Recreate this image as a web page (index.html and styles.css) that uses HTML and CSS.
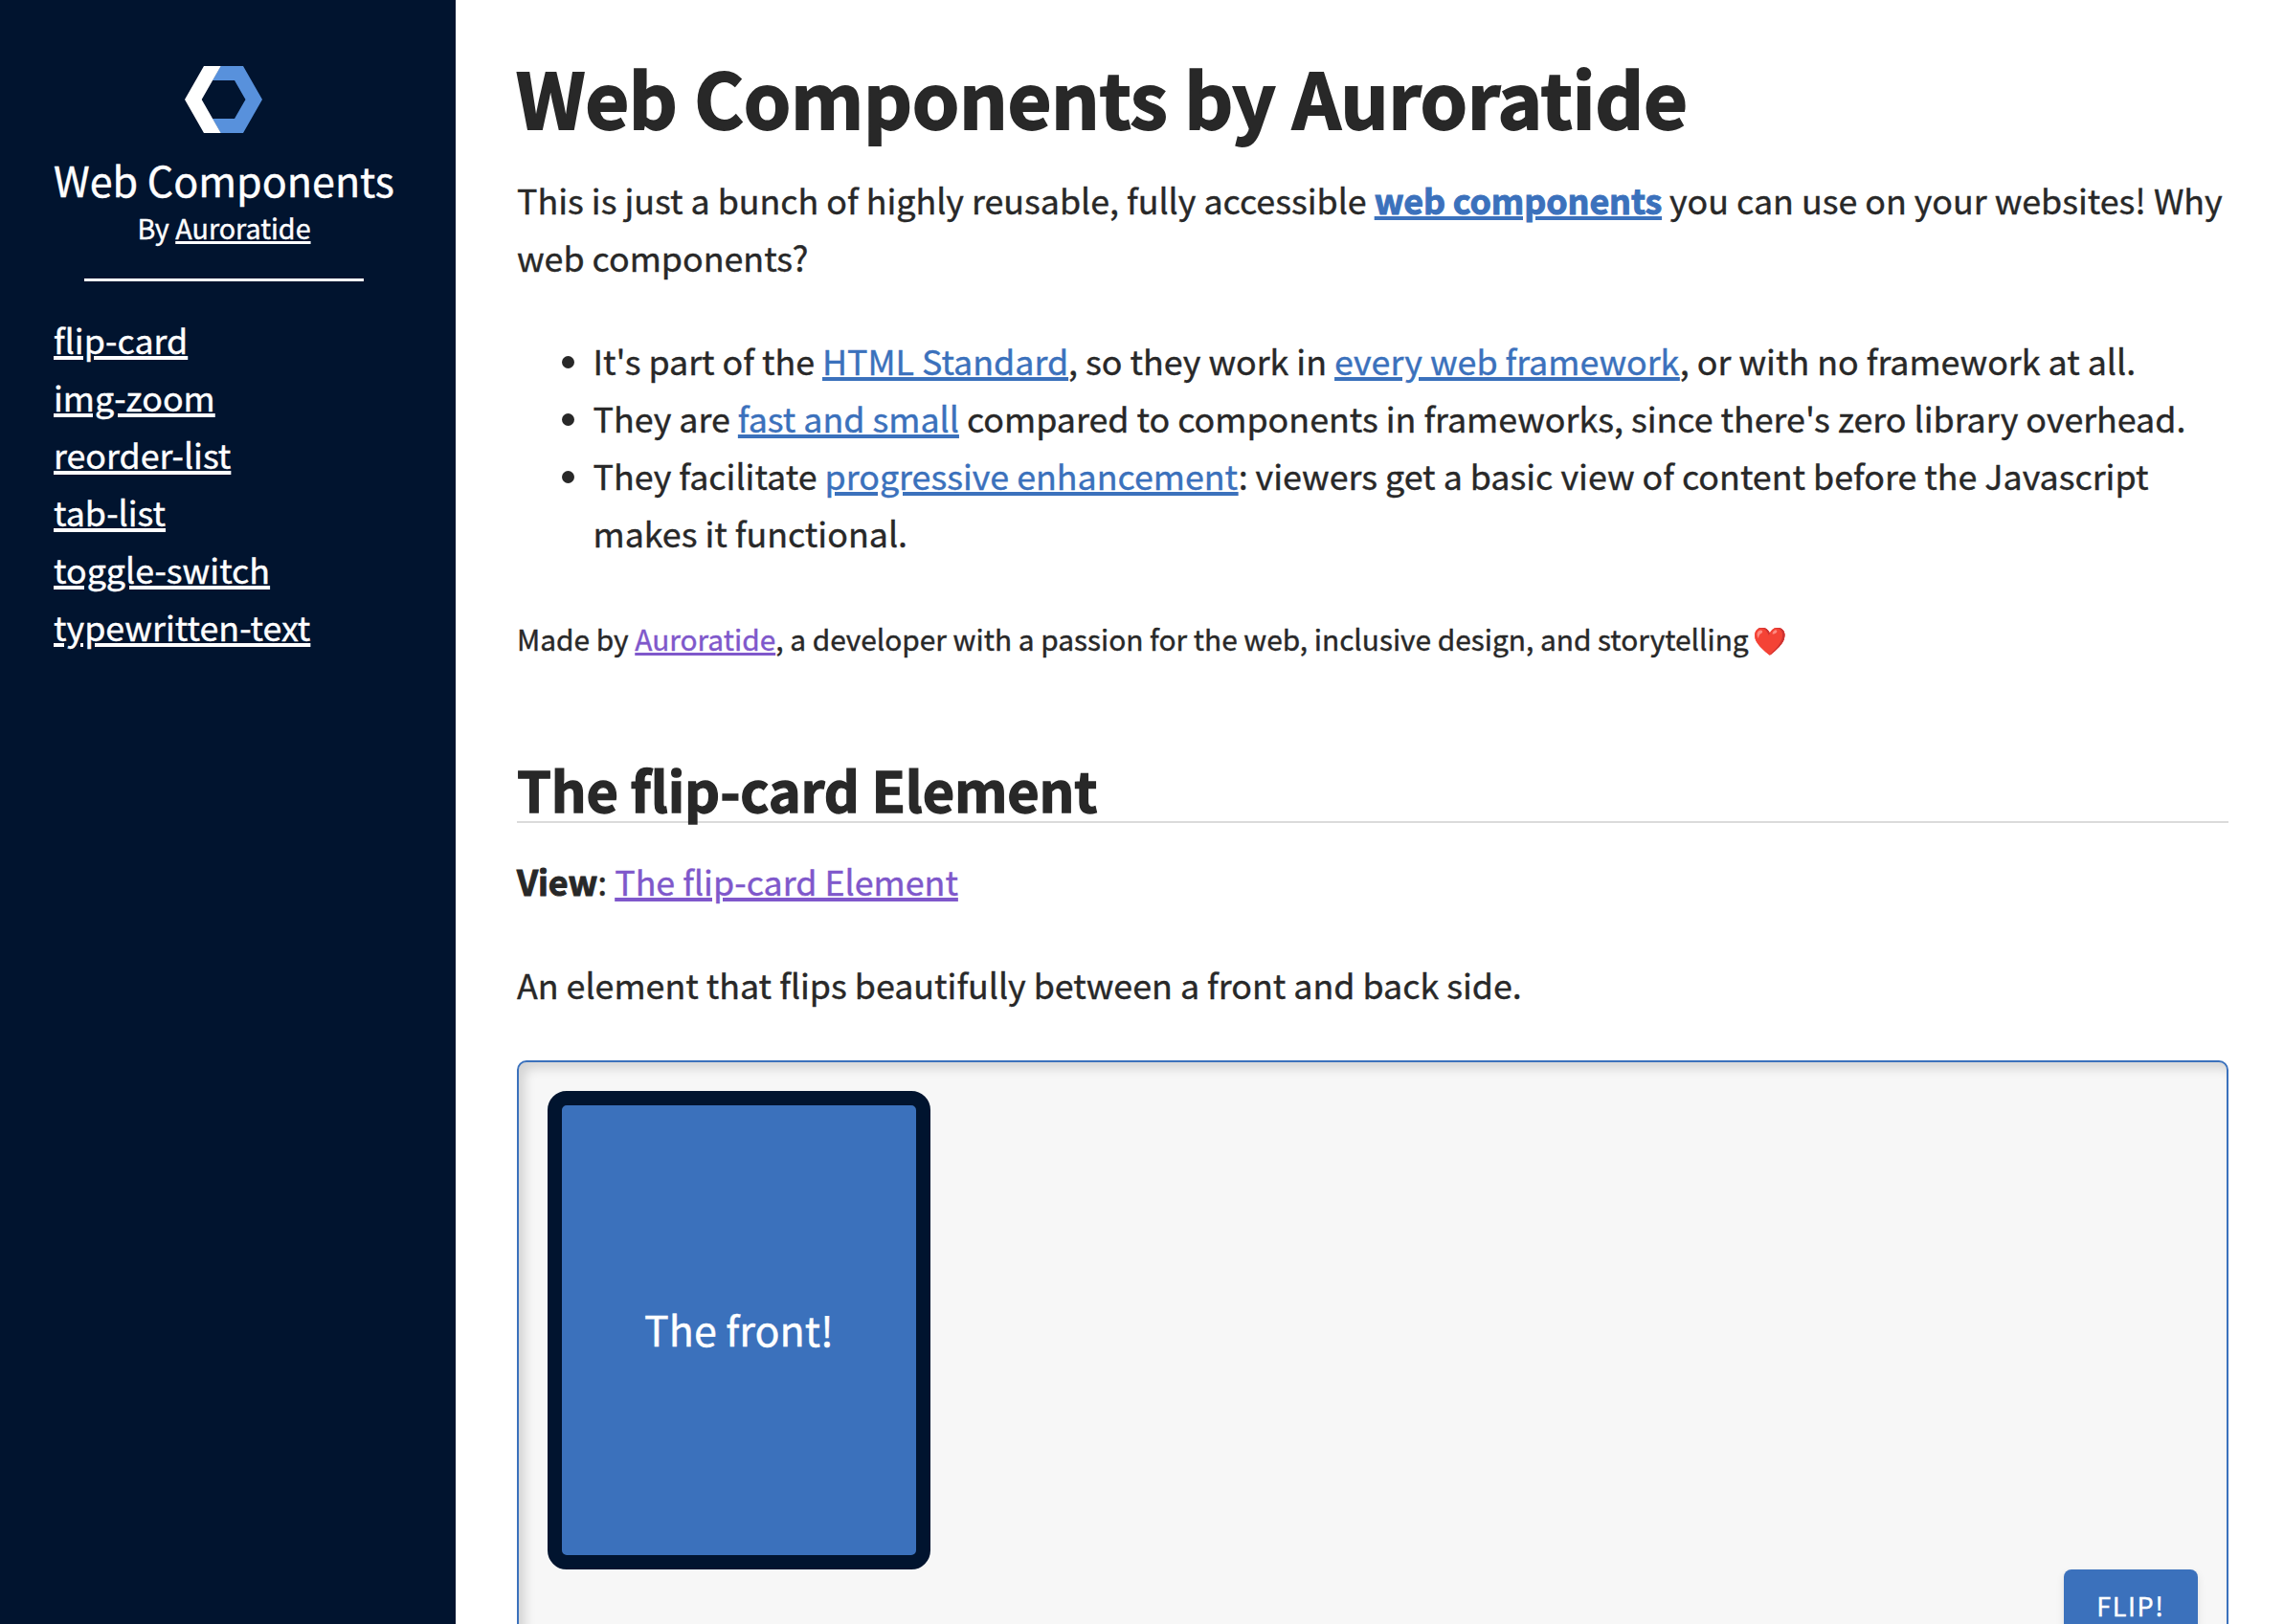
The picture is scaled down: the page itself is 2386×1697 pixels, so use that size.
FILE: index.html
```html
<!DOCTYPE html>
<html lang="en">
<head>
<meta charset="utf-8">
<title>Web Components by Auroratide</title>
<link rel="stylesheet" href="styles.css">
</head>
<body>
<div class="layout">
  <aside class="sidebar">
    <header class="brand">
      <svg class="logo" viewBox="0 0 81 70" aria-hidden="true">
        <path fill="#5891dc" d="M37.5 0H61L81 35 61 70H37.5L29 55H52L63.5 35 52 15H29Z"/>
        <path fill="#fff" d="M20 0H37.7L17.7 35 37.7 70H20L0 35Z"/>
      </svg>
      <div class="brand-name">Web Components</div>
      <div class="brand-by">By <a href="#">Auroratide</a></div>
      <hr class="rule">
    </header>
    <nav class="nav">
      <a href="#">flip-card</a>
      <a href="#">img-zoom</a>
      <a href="#">reorder-list</a>
      <a href="#">tab-list</a>
      <a href="#">toggle-switch</a>
      <a href="#">typewritten-text</a>
    </nav>
  </aside>
  <main class="content">
    <h1>Web Components by Auroratide</h1>
    <p>This is just a bunch of highly reusable, fully accessible <a href="#"><strong>web components</strong></a> you can use on your websites! Why web components?</p>
    <ul class="reasons">
      <li>It's part of the <a href="#">HTML Standard</a>, so they work in <a href="#">every web framework</a>, or with no framework at all.</li>
      <li>They are <a href="#">fast and small</a> compared to components in frameworks, since there's zero library overhead.</li>
      <li>They facilitate <a href="#">progressive enhancement</a>: viewers get a basic view of content before the Javascript makes it functional.</li>
    </ul>
    <p class="credit">Made by <a class="visited" href="#">Auroratide</a>, a developer with a passion for the web, inclusive design, and storytelling <span class="heart">❤️</span></p>
    <h2>The flip-card Element</h2>
    <p><strong>View</strong>: <a class="visited" href="#">The flip-card Element</a></p>
    <p>An element that flips beautifully between a front and back side.</p>
    <section class="demo">
      <div class="card">The front!</div>
      <button class="flip">FLIP!</button>
    </section>
  </main>
</div>
</body>
</html>
```
FILE: styles.css
```css
* { box-sizing: border-box; }
html, body { height: 100%; }
body {
  margin: 0;
  overflow: hidden;
  background: #fff;
  color: #282828;
  font: 400 35.8px/60px "Noto Sans CJK JP", "Noto Sans", sans-serif;
  -webkit-text-stroke: 0.4px currentColor;
}
a {
  color: #3b71bc;
  text-decoration: underline;
  text-decoration-thickness: 4px;
  text-underline-offset: 2px;
  -webkit-text-stroke-color: currentColor;
}
a.visited { color: #7f58cb; }
strong {
  font-weight: 700;
  letter-spacing: -0.1px;
  -webkit-text-stroke-width: 1px;
}

.layout { display: flex; height: 100%; }

/* Sidebar */
.sidebar {
  flex: none;
  width: 476px;
  padding: 69px 64px 0 56px;
  background: #01142f;
  color: #fff;
}
.sidebar a { color: inherit; }
.brand {
  display: flex;
  flex-direction: column;
  align-items: center;
  width: 356px;
}
.logo { display: block; width: 81px; height: 70px; margin-right: 1px; }
.brand-name {
  margin-top: 18px;
  font-size: 43px;
  line-height: 60px;
  white-space: nowrap;
}
.brand-by { font-size: 28.7px; line-height: 42px; }
.brand-by a { text-decoration-thickness: 3px; }
.rule {
  width: 292px;
  height: 3px;
  margin: 32px 0 0;
  border: 0;
  background: #fff;
}
.nav {
  display: flex;
  flex-direction: column;
  align-items: flex-start;
  margin-top: 30px;
}

/* Main column */
.content {
  flex: 1;
  min-width: 0;
  padding: 57px 58px 0 64px;
}
h1 {
  margin: 0 0 33px -1px;
  font-size: 79.2px;
  line-height: 88px;
  letter-spacing: -0.32px;
  -webkit-text-stroke-width: 1.8px;
}
p { margin: 0 0 48px; }
.reasons {
  margin: 0 0 56px;
  padding: 0 0 0 79.5px;
  list-style: none;
}
.reasons li { position: relative; }
.reasons li::before {
  content: "";
  position: absolute;
  top: 25.5px;
  left: -33px;
  width: 13.5px;
  height: 13.5px;
  border-radius: 50%;
  background: currentColor;
}
.credit {
  height: 50px;
  margin-bottom: 96px;
  font-size: 29.84px;
  line-height: 50px;
}
.credit a { text-decoration-thickness: 3px; }
.heart { margin-left: -2px; font-size: 28.5px; line-height: 1; }
h2 {
  height: 72px;
  margin: 0 0 30px;
  border-bottom: 2px solid #dbdbdb;
  font-size: 57.6px;
  line-height: 72px;
  letter-spacing: -0.2px;
  -webkit-text-stroke-width: 1.3px;
}

/* Demo box */
.demo {
  height: 640px;
  margin-top: 50px;
  padding: 30px;
  border: 2px solid #3b71bc;
  border-radius: 10px;
  background: #f7f7f7;
  box-shadow: inset 6px 6px 12px rgba(0, 0, 0, 0.15);
  display: flex;
  flex-direction: column;
  align-items: flex-start;
}
.card {
  flex: none;
  display: flex;
  align-items: center;
  justify-content: center;
  width: 400px;
  height: 500px;
  padding-bottom: 5px;
  border: 15px solid #01142f;
  border-radius: 20px;
  background: #3b71bc;
  color: #fff;
  font-size: 43px;
  -webkit-text-stroke-color: currentColor;
}
.flip {
  flex: none;
  align-self: flex-end;
  width: 140px;
  height: 76px;
  padding: 0;
  border: 0;
  border-radius: 8px;
  background: #3b71bc;
  box-shadow: 0 4px 8px rgba(0, 0, 0, 0.1);
  color: #fff;
  font: 400 27px/76px "Noto Sans CJK JP", sans-serif;
  letter-spacing: 1.6px;
}
```
